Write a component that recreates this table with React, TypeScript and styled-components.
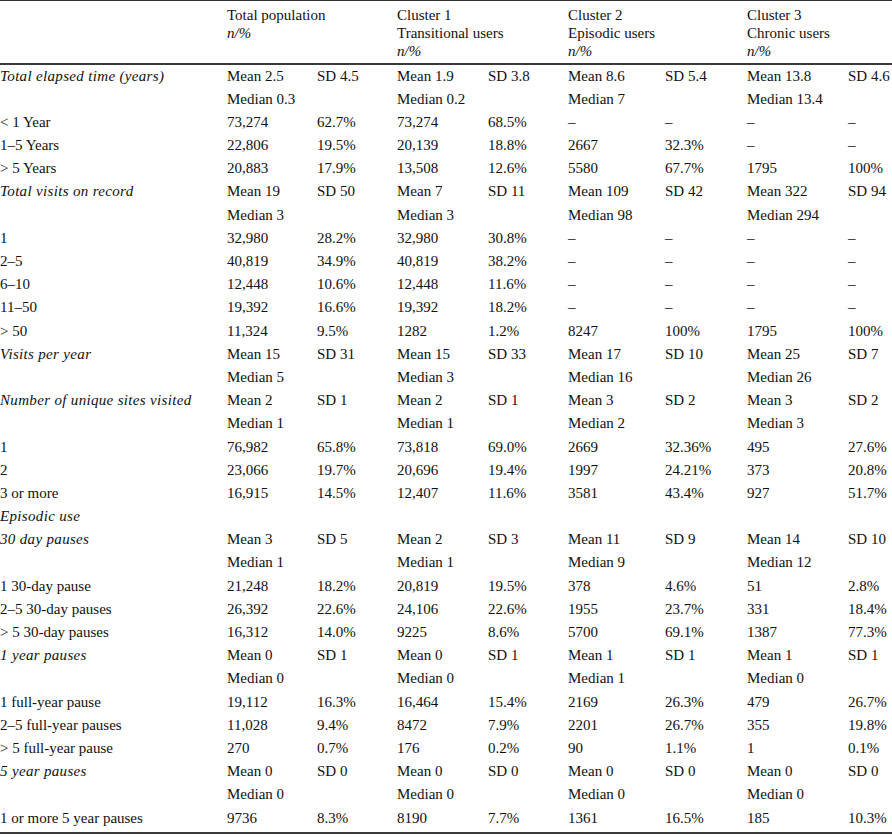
import React from 'react';
import styled, { createGlobalStyle } from 'styled-components';

const GlobalStyle = createGlobalStyle`
  html, body {
    margin: 0;
    padding: 0;
    background: #ffffff;
  }
  body {
    font-family: 'Liberation Serif', 'Times New Roman', serif;
    color: #111111;
  }
`;

const columnWidths = [227, 90, 80, 91, 80, 97, 82, 101, 44];

const Table = styled.table`
  width: 892px;
  table-layout: fixed;
  border-collapse: collapse;
  font-family: 'Liberation Serif', 'Times New Roman', serif;
  font-size: 15px;
  color: #111111;
  border-top: 1.5px solid #333333;
  border-bottom: 2px solid #3a3a3a;
`;

const HeadRow = styled.tr`
  border-bottom: 2px solid #3a3a3a;
`;

const HeadCell = styled.th`
  text-align: left;
  vertical-align: top;
  font-weight: normal;
  line-height: 18px;
  padding: 4.5px 0 3px 0;
  white-space: nowrap;
`;

const Unit = styled.div`
  font-style: italic;
`;

const BodyRow = styled.tr<{ $last?: boolean }>`
  & > td {
    padding: 1px 0 ${(p) => (p.$last ? '4.6px' : '2.2px')} 0;
  }
`;

const Cell = styled.td<{ $italic?: boolean }>`
  line-height: 20px;
  white-space: nowrap;
  font-style: ${(p) => (p.$italic ? 'italic' : 'normal')};
  letter-spacing: ${(p) => (p.$italic ? '0.33px' : 'normal')};
  vertical-align: top;
`;

interface Row {
  label: string;
  italic?: boolean;
  values: string[];
}

const rows: Row[] = [
  { label: 'Total elapsed time (years)', italic: true, values: ['Mean 2.5', 'SD 4.5', 'Mean 1.9', 'SD 3.8', 'Mean 8.6', 'SD 5.4', 'Mean 13.8', 'SD 4.6'] },
  { label: '', values: ['Median 0.3', '', 'Median 0.2', '', 'Median 7', '', 'Median 13.4', ''] },
  { label: '< 1 Year', values: ['73,274', '62.7%', '73,274', '68.5%', '–', '–', '–', '–'] },
  { label: '1–5 Years', values: ['22,806', '19.5%', '20,139', '18.8%', '2667', '32.3%', '–', '–'] },
  { label: '> 5 Years', values: ['20,883', '17.9%', '13,508', '12.6%', '5580', '67.7%', '1795', '100%'] },
  { label: 'Total visits on record', italic: true, values: ['Mean 19', 'SD 50', 'Mean 7', 'SD 11', 'Mean 109', 'SD 42', 'Mean 322', 'SD 94'] },
  { label: '', values: ['Median 3', '', 'Median 3', '', 'Median 98', '', 'Median 294', ''] },
  { label: '1', values: ['32,980', '28.2%', '32,980', '30.8%', '–', '–', '–', '–'] },
  { label: '2–5', values: ['40,819', '34.9%', '40,819', '38.2%', '–', '–', '–', '–'] },
  { label: '6–10', values: ['12,448', '10.6%', '12,448', '11.6%', '–', '–', '–', '–'] },
  { label: '11–50', values: ['19,392', '16.6%', '19,392', '18.2%', '–', '–', '–', '–'] },
  { label: '> 50', values: ['11,324', '9.5%', '1282', '1.2%', '8247', '100%', '1795', '100%'] },
  { label: 'Visits per year', italic: true, values: ['Mean 15', 'SD 31', 'Mean 15', 'SD 33', 'Mean 17', 'SD 10', 'Mean 25', 'SD 7'] },
  { label: '', values: ['Median 5', '', 'Median 3', '', 'Median 16', '', 'Median 26', ''] },
  { label: 'Number of unique sites visited', italic: true, values: ['Mean 2', 'SD 1', 'Mean 2', 'SD 1', 'Mean 3', 'SD 2', 'Mean 3', 'SD 2'] },
  { label: '', values: ['Median 1', '', 'Median 1', '', 'Median 2', '', 'Median 3', ''] },
  { label: '1', values: ['76,982', '65.8%', '73,818', '69.0%', '2669', '32.36%', '495', '27.6%'] },
  { label: '2', values: ['23,066', '19.7%', '20,696', '19.4%', '1997', '24.21%', '373', '20.8%'] },
  { label: '3 or more', values: ['16,915', '14.5%', '12,407', '11.6%', '3581', '43.4%', '927', '51.7%'] },
  { label: 'Episodic use', italic: true, values: ['', '', '', '', '', '', '', ''] },
  { label: '30 day pauses', italic: true, values: ['Mean 3', 'SD 5', 'Mean 2', 'SD 3', 'Mean 11', 'SD 9', 'Mean 14', 'SD 10'] },
  { label: '', values: ['Median 1', '', 'Median 1', '', 'Median 9', '', 'Median 12', ''] },
  { label: '1 30-day pause', values: ['21,248', '18.2%', '20,819', '19.5%', '378', '4.6%', '51', '2.8%'] },
  { label: '2–5 30-day pauses', values: ['26,392', '22.6%', '24,106', '22.6%', '1955', '23.7%', '331', '18.4%'] },
  { label: '> 5 30-day pauses', values: ['16,312', '14.0%', '9225', '8.6%', '5700', '69.1%', '1387', '77.3%'] },
  { label: '1 year pauses', italic: true, values: ['Mean 0', 'SD 1', 'Mean 0', 'SD 1', 'Mean 1', 'SD 1', 'Mean 1', 'SD 1'] },
  { label: '', values: ['Median 0', '', 'Median 0', '', 'Median 1', '', 'Median 0', ''] },
  { label: '1 full-year pause', values: ['19,112', '16.3%', '16,464', '15.4%', '2169', '26.3%', '479', '26.7%'] },
  { label: '2–5 full-year pauses', values: ['11,028', '9.4%', '8472', '7.9%', '2201', '26.7%', '355', '19.8%'] },
  { label: '> 5 full-year pause', values: ['270', '0.7%', '176', '0.2%', '90', '1.1%', '1', '0.1%'] },
  { label: '5 year pauses', italic: true, values: ['Mean 0', 'SD 0', 'Mean 0', 'SD 0', 'Mean 0', 'SD 0', 'Mean 0', 'SD 0'] },
  { label: '', values: ['Median 0', '', 'Median 0', '', 'Median 0', '', 'Median 0', ''] },
  { label: '1 or more 5 year pauses', values: ['9736', '8.3%', '8190', '7.7%', '1361', '16.5%', '185', '10.3%'] },
];

const groups = [
  ['Total population'],
  ['Cluster 1', 'Transitional users'],
  ['Cluster 2', 'Episodic users'],
  ['Cluster 3', 'Chronic users'],
];

export default function App() {
  return (
    <>
      <GlobalStyle />
      <Table>
        <colgroup>
          {columnWidths.map((w, i) => (
            <col key={i} style={{ width: w }} />
          ))}
        </colgroup>
        <thead>
          <HeadRow>
            <HeadCell />
            {groups.map((lines, i) => (
              <HeadCell key={i} colSpan={i === 3 ? 3 : 2}>
                {lines.map((line) => (
                  <div key={line}>{line}</div>
                ))}
                <Unit>n/%</Unit>
              </HeadCell>
            ))}
          </HeadRow>
        </thead>
        <tbody>
          {rows.map((row, i) => (
            <BodyRow key={i} $last={i === rows.length - 1}>
              <Cell $italic={row.italic}>{row.label}</Cell>
              {row.values.map((v, j) => (
                <Cell key={j} colSpan={j === 7 ? 2 : 1}>
                  {v}
                </Cell>
              ))}
            </BodyRow>
          ))}
        </tbody>
      </Table>
    </>
  );
}
